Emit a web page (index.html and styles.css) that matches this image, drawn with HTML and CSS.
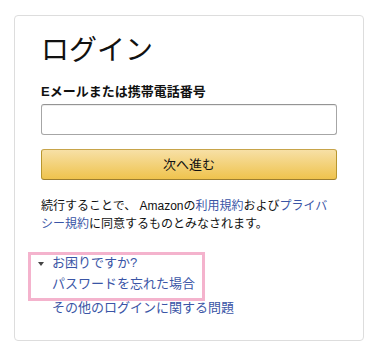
FILE: index.html
```html
<!DOCTYPE html>
<html lang="ja">
<head>
<meta charset="utf-8">
<title>ログイン</title>
<link rel="stylesheet" href="styles.css">
</head>
<body>
<div class="page">
  <div class="card">
    <h1 class="title">ログイン</h1>
    <label class="label" for="email">Eメールまたは携帯電話番号</label>
    <input class="input" id="email" type="text">
    <button class="button" type="button">次へ進む</button>
    <p class="legal">続行することで、 Amazonの<a class="link" href="#">利用規約</a>および<a class="link" href="#">プライバシー規約</a>に同意するものとみなされます。</p>
    <div class="help">
      <div class="help-toggle"><span class="caret"></span><a class="link" href="#">お困りですか?</a></div>
      <div class="help-item"><a class="link" href="#">パスワードを忘れた場合</a></div>
      <div class="help-item help-item-last"><a class="link" href="#">その他のログインに関する問題</a></div>
      <div class="highlight"></div>
    </div>
  </div>
</div>
</body>
</html>
```
FILE: styles.css
```css
html, body {
  margin: 0;
  padding: 0;
  background: #fff;
}
body {
  font-family: "Liberation Sans", "Noto Sans CJK JP", sans-serif;
  color: #111;
}
.page {
  padding: 15px 0 0 14px;
}
.card {
  box-sizing: border-box;
  width: 350px;
  border: 1px solid #ddd;
  border-radius: 4px;
  padding: 17px 26px 21px;
}
.title {
  margin: 0 0 13px;
  font-size: 28px;
  font-weight: 400;
  line-height: 36px;
  color: #111;
}
.label {
  display: block;
  font-size: 13px;
  font-weight: 700;
  line-height: 19px;
  margin-bottom: 3px;
}
.input {
  display: block;
  box-sizing: border-box;
  width: 100%;
  height: 31px;
  margin: 0;
  border: 1px solid #a6a6a6;
  border-top-color: #949494;
  border-radius: 3px;
  box-shadow: 0 1px 0 rgba(0,0,0,.07) inset;
  background: #fff;
}
.button {
  display: block;
  box-sizing: border-box;
  width: 100%;
  height: 31px;
  margin: 14px 0 0;
  padding: 0;
  border: 1px solid;
  border-color: #c7a44a #b8962e #9c7e31;
  border-radius: 3px;
  background: linear-gradient(to bottom, #f7e0a6, #efc34d);
  font-family: "Liberation Sans", "Noto Sans CJK JP", sans-serif;
  font-size: 13px;
  line-height: 29px;
  color: #111;
}
.legal {
  margin: 17px 0 0;
  font-size: 12px;
  line-height: 18px;
}
.link {
  color: #3a55a6;
  text-decoration: none;
}
.help {
  position: relative;
  margin-top: 19px;
  padding-left: 11px;
  font-size: 13px;
}
.help-toggle {
  display: flex;
  align-items: flex-start;
  line-height: 21px;
  margin-left: -14px;
}
.caret {
  flex: none;
  width: 0;
  height: 0;
  border-left: 3px solid transparent;
  border-right: 3px solid transparent;
  border-top: 4px solid #444;
  margin-top: 10px;
  margin-right: 8px;
}
.help-item {
  line-height: 22px;
}
.help-item-last {
  margin-top: 2px;
}
.highlight {
  position: absolute;
  box-sizing: border-box;
  left: -13px;
  top: 0;
  width: 177px;
  height: 49px;
  border: 3px solid #f4b3cd;
  pointer-events: none;
}
```
